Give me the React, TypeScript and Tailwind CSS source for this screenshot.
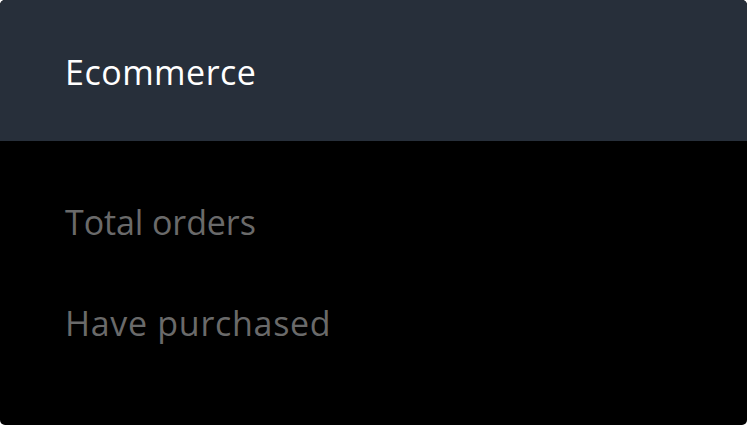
export default function App() {
  return (
    <div className="w-[747px] h-[425px] bg-white font-['Open_Sans',sans-serif]">
      <div className="w-full h-full rounded-[5px] overflow-hidden bg-black flex flex-col">
        <div className="h-[141px] bg-[#272f3a] flex items-center px-[65px]">
          <h1 className="text-[34px] font-normal text-white leading-none tracking-[0.5px] pt-[3px]">Ecommerce</h1>
        </div>
        <div className="flex flex-col px-[65px] pt-[63px] gap-[65px]">
          <span className="text-[34px] font-normal text-[#6a6a6a] leading-[36px] tracking-[-0.1px]">Total orders</span>
          <span className="text-[34px] font-normal text-[#6a6a6a] leading-[36px] tracking-[0.7px]">Have purchased</span>
        </div>
      </div>
    </div>
  )
}
